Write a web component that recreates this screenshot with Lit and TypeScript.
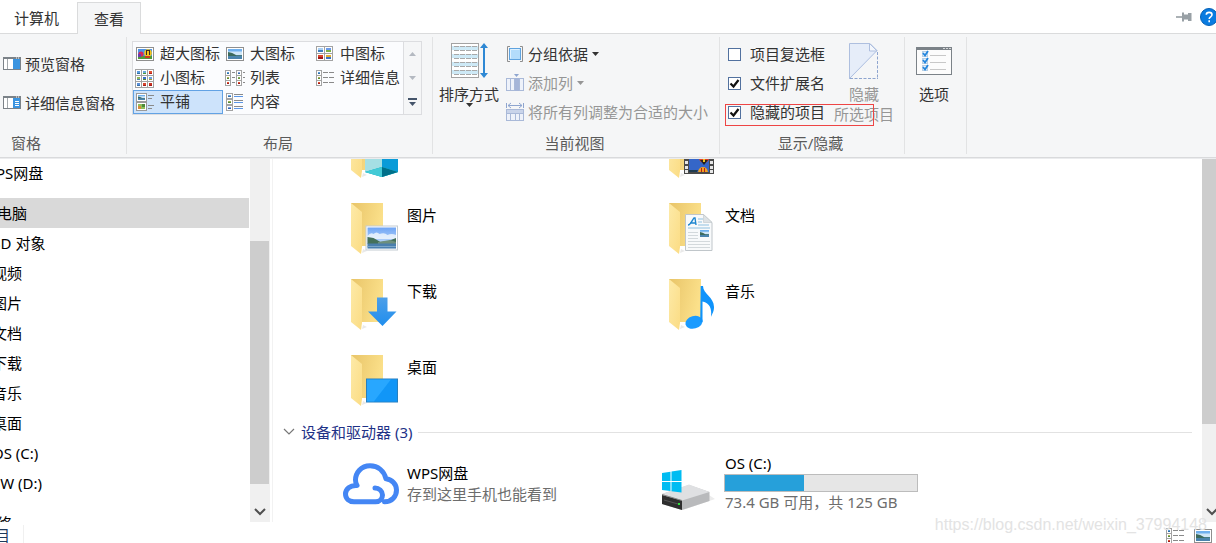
import { LitElement, html, svg, css, nothing } from "lit";
import { customElement, state } from "lit/decorators.js";

/* ---------- small ribbon glyphs ---------- */

const thumb = (x: number, y: number, w: number, h: number, c1: string, c2: string) => svg`
  <rect x=${x + 0.5} y=${y + 0.5} width=${w - 1} height=${h - 1} fill="#fff" stroke="#a3a3a3"/>
  <rect x=${x + 2} y=${y + 2} width=${w - 4} height=${(h - 4) / 2} fill=${c1}/>
  <rect x=${x + 2} y=${y + h / 2} width=${w - 4} height=${(h - 4) / 2} fill=${c2}/>`;

const line = (x: number, y: number, w: number, c = "#8a8a8a") =>
  svg`<rect x=${x} y=${y} width=${w} height="1" fill=${c}/>`;

const landscape = (x: number, y: number, w: number, h: number) => svg`
  <rect x=${x} y=${y} width=${w} height=${h} fill="#6fb0ee"/>
  <rect x=${x} y=${y + h * 0.25} width=${w} height=${h * 0.35} fill="#cfe6f8"/>
  <path d="M${x} ${y + h * 0.3}L${x + w * 0.3} ${y + h * 0.4}L${x + w * 0.6} ${y + h * 0.62}H${x + w}V${y + h * 0.75}H${x}Z" fill="#3c6a5c"/>
  <rect x=${x} y=${y + h * 0.72} width=${w} height=${h * 0.28} fill="#4a83ad"/>`;

const small = (body: unknown, w = 20, h = 20) =>
  html`<svg class="glyph" width=${w} height=${h} viewBox="0 0 ${w} ${h}" aria-hidden="true">${body}</svg>`;

const icons: Record<string, () => unknown> = {
  xl: () => small(svg`
    <rect x="1.5" y="3.5" width="17" height="13" fill="#fff" stroke="#8f8f8f"/>
    <rect x="3" y="5" width="14" height="10" fill="#4d93e6"/>
    <rect x="3" y="12" width="14" height="3" fill="#4f9a3b"/>
    <circle cx="6" cy="10" r="2.6" fill="#d5285a"/><rect x="3" y="10" width="3" height="3" fill="#6b3bb0"/>
    <circle cx="13" cy="9" r="3.8" fill="#f3c41c"/><rect x="11" y="7" width="1" height="4" fill="#3a2a20"/><rect x="14" y="7" width="1" height="4" fill="#3a2a20"/>
    <rect x="11" y="6" width="4" height="1" fill="#3a2a20"/><rect x="10" y="12" width="5" height="2" fill="#c93a22"/>`),
  lg: () => small(svg`<rect x="1.5" y="3.5" width="17" height="13" fill="#fff" stroke="#8f8f8f"/>${landscape(3, 5, 14, 10)}`),
  md: () => small(svg`${thumb(1, 2, 9, 8, "#a9d0f5", "#3f7fc0")}${thumb(9, 2, 9, 8, "#6c9bea", "#7ab04a")}
    ${thumb(1, 9, 9, 8, "#d8452c", "#a01818")}${thumb(9, 9, 9, 8, "#e0b030", "#3a72c8")}`),
  sm: () => small(svg`${[0, 1, 2].map((r) => [0, 1, 2].map((c) => svg`
    <rect x=${0.5 + c * 6} y=${1.5 + r * 6} width="6" height="6" fill="#fff" stroke="#a3a3a3"/>
    <rect x=${2 + c * 6} y=${3 + r * 6} width="3" height="2" fill=${[["#5a9be0", "#6aa8d8", "#e05030"], ["#8fb85a", "#3d6fc4", "#6a9fe0"], ["#5a8fd8", "#d8452c", "#c83020"]][r][c]}/>
    <rect x=${2 + c * 6} y=${5 + r * 6} width="3" height="1" fill=${[["#2f6f9f", "#4f9a3b", "#b01818"], ["#4f7fae", "#4f8a3b", "#9a9a3b"], ["#3a6fa8", "#a02020", "#a01818"]][r][c]}/>`))}`),
  list: () => small(svg`${[0, 1, 2].map((r) => svg`
    ${thumb(0, 2 + r * 5, 6, 6, ["#5a9be0", "#b0b050", "#e05030"][r], ["#2f6f9f", "#4f8a3b", "#a01818"][r])}${line(7, 4 + r * 5, 3)}
    ${thumb(11, 2 + r * 5, 6, 6, ["#8a9fe0", "#7fb85a", "#e05030"][r], ["#2f6f9f", "#6a8a3b", "#a01818"][r])}${line(18, 4 + r * 5, 2)}`)}`),
  details: () => small(svg`${[0, 1, 2].map((r) => svg`
    ${thumb(1, 2 + r * 5, 6, 6, ["#5a9be0", "#b0b050", "#e05030"][r], ["#2f6f9f", "#4f8a3b", "#a01818"][r])}
    ${line(8, 4 + r * 5, 5)}${line(14, 4 + r * 5, 5)}`)}`),
  tiles: () => small(svg`
    <rect x="1.5" y="1.5" width="10" height="8" fill="#fff" stroke="#9a9a9a"/>${landscape(3, 3, 7, 5)}
    <rect x="1.5" y="10.5" width="10" height="8" fill="#fff" stroke="#9a9a9a"/>
    <rect x="3" y="12" width="7" height="5" fill="#8fc05a"/><rect x="3" y="14" width="3" height="3" fill="#d88a3a"/><rect x="7" y="12" width="3" height="3" fill="#4f8a3b"/>
    ${line(13, 3, 6)}${line(13, 6, 4)}${line(13, 13, 6)}${line(13, 16, 4)}`),
  content: () => small(svg`${[0, 1, 2].map((r) => svg`
    ${thumb(1, 1 + r * 6, 7, 6, ["#6aa8e8", "#a0b050", "#7aa8e8"][r], ["#3a6fa8", "#4f8a3b", "#3a5fa8"][r])}
    ${line(9, 2 + r * 6, 9)}<rect x="9" y=${4 + r * 6} width="9" height="1" fill="#5b97e8"/>`)}`),
  preview: () => small(svg`
    <rect x="0.5" y="3.5" width="17" height="12" fill="#fff" stroke="#7b8288"/>
    <rect x="0" y="3" width="18" height="2" fill="#7b8288"/><path d="M13 4h1M15 4h1" stroke="#fff"/>
    <rect x="4" y="5" width="1" height="10" fill="#a4a9ad"/><rect x="10" y="5" width="7" height="10" fill="#3b94e0"/>`, 18),
  detailPane: () => small(svg`
    <rect x="0.5" y="3.5" width="17" height="12" fill="#fff" stroke="#7b8288"/>
    <rect x="0" y="3" width="18" height="2" fill="#7b8288"/><path d="M13 4h1M15 4h1" stroke="#fff"/>
    <rect x="4" y="5" width="1" height="10" fill="#a4a9ad"/><rect x="10" y="5" width="7" height="10" fill="#3b94e0"/>
    <path d="M12 8.500h4M12 10.500h4M12 12.500h4" stroke="#fff"/>`, 18),
  group: () => small(svg`
    <path d="M4 2.500H1.500v15H4M14 2.500h2.500v15H14" fill="none" stroke="#8f8f8f"/>
    <rect x="3.500" y="4.500" width="11" height="11" fill="#b3dcfb" stroke="#5fa3df"/><path d="M4.500 14.500v-9h9" fill="none" stroke="#dff1fe"/>`, 18),
  addCol: () => small(svg`
    <path d="M8 1h5l-2.500 3z" fill="#8ea5cf"/><rect x="0.500" y="5.500" width="17" height="12" fill="#eef2fa" stroke="#a9b9d8"/>
    <path d="M4.500 5v13M8.500 5v13M13.500 5v13" stroke="#a9b9d8"/><rect x="9" y="5" width="4" height="13" fill="#a5b5d8"/>`, 18),
  fitCols: () => small(svg`
    <path d="M0.500 1v5M17.500 1v5M2 3.500h14" stroke="#8ea5cf"/><path d="M5 1L2 3.500 5 6M13 1l3 2.500L13 6" fill="none" stroke="#8ea5cf"/>
    <rect x="0.500" y="7.500" width="17" height="11" fill="#eef2fa" stroke="#a9b9d8"/><rect x="1" y="8" width="16" height="3" fill="#c9d4ea"/>
    <path d="M0 11.500h18M4.500 12v7M9.500 12v7M13.500 12v7" stroke="#a9b9d8"/>`, 18),
};

const sortIcon = html`<svg class="glyph" width="37" height="37" viewBox="0 0 37 37" aria-hidden="true">
  <rect x="0.500" y="0.500" width="27" height="34" fill="#fff" stroke="#a3a3a3"/>
  ${[3, 11, 19, 27].map((y) => svg`<rect x="1" y=${y} width="26" height="4" fill="#cde9f6"/>`)}
  ${[3, 7, 11, 15, 19, 23, 27, 31].map((y) => svg`<path d="M3 ${y + 0.5}h5M9 ${y + 0.5}h5M15 ${y + 0.5}h5M21 ${y + 0.5}h5" stroke="#a8a8a8"/>`)}
  <path d="M33 0l4 5h-3v25h3l-4 5-4-5h3V5h-3z" fill="#2e88d4"/></svg>`;

const hideIcon = html`<svg class="glyph" width="30" height="37" viewBox="0 0 30 37" aria-hidden="true">
  <path d="M1 36V1h20l7 7z" fill="#e6edf9"/><path d="M0.500 36V0.500H21l7 7L0.500 35.500" fill="none" stroke="#aebfdf"/>
  <path d="M20.500 0.500v7.500H28z" fill="#f4f7fc" stroke="#aebfdf"/>
  <path d="M28.500 9v27M1 35.500h28" fill="none" stroke="#8ea5cf" stroke-dasharray="3 1.500"/></svg>`;

const optionsIcon = html`<svg class="glyph" width="36" height="28" viewBox="0 0 36 28" aria-hidden="true">
  <rect x="0.500" y="0.500" width="35" height="27" fill="#fcfcfc" stroke="#7b8288"/><rect width="36" height="3" fill="#7b8288"/>
  <path d="M27 1.500h2M30 1.500h2M33 1.500h2" stroke="#d5d8da"/>
  ${[4, 11, 18].map((y) => svg`<rect x="6.500" y=${y + 0.5} width="5" height="5" fill="#e7f1fb" stroke="#b5cfe6"/>
    <path d="M7 ${y + 2}l2 2.500 3-4.500" fill="none" stroke="#2486dd" stroke-width="1.800"/>
    <path d="M14 ${y + 4.5}h16" stroke="#c8c8c8"/>`)}</svg>`;

const caret = html`<svg class="caret" width="7" height="4" viewBox="0 0 7 4" aria-hidden="true"><path d="M0 0h7L3.500 4z" fill="currentColor"/></svg>`;

const chevron = (w: number, h: number, sw: number) => html`<svg class="glyph" width=${w} height=${h} viewBox="0 0 12 8" aria-hidden="true">
  <path d="M1 1l5 5 5-5" fill="none" stroke="currentColor" stroke-width=${sw}/></svg>`;

/* ---------- large tile art ---------- */

const overlays: Record<string, () => unknown> = {
  objects: () => svg`<path d="M15 16l17-6 16 6v30l-16 5-17-5z" fill="#35c3d6"/>
    <path d="M32 10l16 6v30l-16-5z" fill="#0a9bd8"/><path d="M15 16l17-6v31l-17 5z" fill="#a5dfe4"/>
    <path d="M15 46l17-5 16 5-16 5z" fill="#1fb5c6"/><path d="M32 41l16 5-16 5z" fill="#00708a"/><path d="M15 46l17-5v10z" fill="#43cad6"/>`,
  video: () => svg`<rect x="16" y="12" width="30" height="36" fill="#4a4a4a"/>
    <rect x="21" y="12" width="20" height="34" fill="#3566c8"/>
    ${[15, 20, 25, 30, 35, 40, 44].map((y) => svg`<rect x="17" y=${y} width="3" height="3" fill="#e8e8e8"/><rect x="42" y=${y} width="3" height="3" fill="#e8e8e8"/>`)}
    <ellipse cx="36" cy="32" rx="5" ry="5" fill="#e04428"/><path d="M32 34l4 5 4-5z" fill="#222"/><path d="M35 28h2v8h-2z" fill="#f3c41c"/>
    <path d="M30 46q1-5 5-5t5 5z" fill="#f0a020"/><path d="M33 42h1v4h-1zM36 42h1v4h-1z" fill="#b02020"/><path d="M21 44h9l-1 2h-8z" fill="#203c50"/>`,
  picture: () => svg`<rect x="16" y="24" width="31.500" height="24" fill="#fff" stroke="#c4ccd2"/>
    <rect x="17.500" y="25.500" width="28.500" height="21" fill="url(#sky)"/>
    <path d="M17.500 34q3-4 6-2 3-3 6 0 5-2 8 1 4-2 8.500 0v4h-28.500z" fill="#f4f9fd" opacity=".8"/>
    <path d="M17.500 35l6 1 7 4 8-1 7.500-3v6h-28.500z" fill="#44705a"/><path d="M28 40l12-2 6 2v2H28z" fill="#6d8f7c"/>
    <rect x="17.500" y="41.500" width="28.500" height="5" fill="#4a7fae"/><path d="M17.500 44.500h28.500" stroke="#7ba6c8"/>`,
  document: () => svg`<path d="M17.500 12.500h18l8.500 8V48.500h-26.500z" fill="#f8fafb" stroke="#c0c6ca"/><path d="M35.500 12.500v8H44z" fill="#dde2e5" stroke="#c0c6ca" stroke-width=".6"/>
    <path d="M20 23c3 0 4-5 6-7h1l1 7M22 21h6" fill="none" stroke="#1e86cf" stroke-width="1.400"/>
    <path d="M30 17h5M30 20h4M30 23h11M20 26h22" stroke="#8fc0e0"/>
    <path d="M20 30.500h10M20 33.500h10M20 36.500h10M20 39.500h22M20 42.500h22M20 45.500h22" stroke="#d3d9dc"/>${landscape(32, 28, 9, 7)}`,
  download: () => svg`<path d="M27 19.500h10.500v14h9L32.500 48 18 33.500h9z" fill="url(#blue)"/>`,
  music: () => svg`<ellipse cx="26" cy="44.300" rx="8.800" ry="6.200" transform="rotate(-15 26 44.300)" fill="#1a9bff"/>
    <path d="M32.700 8H35c0 8 11 11 11 21 0 5-2 7-3 10 1-8-1-14-8.500-15.500V44h-2.300z" fill="#0f93fb"/>`,
  desktop: () => svg`<rect x="16.500" y="25" width="31" height="23" fill="#0c9cff" stroke="#287fbd"/><path d="M17 25.500h24L24 47.500h-7z" fill="#35adff" opacity=".7"/><path d="M41 25.500h6v22H24z" fill="#1592f2" opacity=".6"/>`,
};

const folder = (kind: string) => html`<svg class="art" width="64" height="56" viewBox="-7 0 64 56" aria-hidden="true">
  <defs>
    <linearGradient id="back" x1="0" x2="1" y2="0.300"><stop offset="0" stop-color="#e8c468"/><stop offset="1" stop-color="#fbe08a"/></linearGradient>
    <linearGradient id="flap" x1="0" x2="1" y2="1"><stop offset="0" stop-color="#fdeaa8"/><stop offset="1" stop-color="#fbdc84"/></linearGradient>
    <linearGradient id="sky" x2="0" y2="1"><stop offset="0" stop-color="#6fa5f5"/><stop offset="1" stop-color="#d5e8fa"/></linearGradient>
    <linearGradient id="blue" x2="0" y2="1"><stop offset="0" stop-color="#4d9fe8"/><stop offset="1" stop-color="#1f8eee"/></linearGradient>
  </defs>
  <path d="M12 51l5-2-4-2z" fill="#e9e9e9"/>
  <path d="M1 1h32v43H1z" fill="url(#back)"/><path d="M1 1l11 9v35l-1 7L1 44z" fill="url(#flap)"/>
  ${overlays[kind]()}</svg>`;

const cloud = html`<svg class="art" width="64" height="42" viewBox="0 0 64 42" aria-hidden="true">
  <path d="M41.500 38.700c7.500 0 12-5.500 12-11.700 0-6-4.500-10.500-10.500-11.200C41 8 35 2.700 27 2.700 18 2.700 12.500 10 12.500 17c0 2 .3 3.800 1.500 5.500C7 22 2.500 26 2.500 31c0 4.500 3.500 7.700 8.500 7.700h21.500c4.500 0 7-3.200 7-6.700 0-4-3.500-7-7.500-7"
    fill="none" stroke="#4486f4" stroke-width="5" stroke-linecap="round" stroke-linejoin="round"/></svg>`;

const drive = html`<svg class="art" width="64" height="46" viewBox="0 0 64 46" aria-hidden="true">
  <path d="M22 45l32-11-6-4z" fill="#ececec"/>
  <path d="M1 29l27-9 20.500 7v9L21 45 1 39z" fill="#b9babc"/><path d="M1 29l27-9.500L48.500 27 21 35.500z" fill="#dfe0e2"/>
  <path d="M1 30l20 5.500V45L1 39z" fill="#2e2e2e"/><path d="M1 29.500l20 6" stroke="#8a8a8a"/><path d="M3 35l14 4" stroke="#555"/><rect x="17" y="38" width="2" height="2" fill="#2fe03c"/>
  <path d="M1 8l8.500-1.200V16H1zM10.500 6.600L20.500 5v11h-10zM1 17h8.500v9L1 25zM10.500 17h10v10.500l-10-1.300z" fill="#00bcf2"/></svg>`;

@customElement("app-root")
export class AppRoot extends LitElement {
  @state() private view = "平铺";

  private views = [
    ["xl", "超大图标"], ["lg", "大图标"], ["md", "中图标"],
    ["sm", "小图标"], ["list", "列表"], ["details", "详细信息"],
    ["tiles", "平铺"], ["content", "内容"],
  ];

  private tree = [
    { name: "WPS网盘" },
    { name: "此电脑", gap: true, selected: true },
    ...["3D 对象", "视频", "图片", "文档", "下载", "音乐", "桌面", "OS (C:)", "SW (D:)"].map((name) => ({ name, child: true })),
    { name: "网络", gap: true },
  ] as { name: string; gap?: boolean; selected?: boolean; child?: boolean }[];

  private folders = [["picture", "图片"], ["document", "文档"], ["download", "下载"], ["music", "音乐"], ["desktop", "桌面"]];

  static styles = css`
    :host {
      display: flex; flex-direction: column; height: 100vh; overflow: hidden; position: relative;
      background: #fff; color: #000;
      font: 15px/20px "Noto Sans", "Noto Sans CJK SC", sans-serif;
    }
    * { box-sizing: border-box; }
    button { font: inherit; color: inherit; background: none; border: 0; padding: 0; margin: 0; text-align: left; white-space: nowrap; }
    svg { display: block; flex: none; }

    .tabs { display: flex; align-items: flex-end; height: 34px; flex: none; border-bottom: 1px solid #dadbdc; color: #333; }
    .tab { height: 31px; padding: 0 13px; border: 1px solid transparent; border-bottom: 0; }
    .tab.active { height: 32px; padding: 0 16px; margin-bottom: -1px; background: #f5f6f7; border-color: #dadbdc; }
    .tab.first { width: 77px; }
    .tools { display: flex; align-items: center; gap: 8px; margin-left: auto; height: 100%; margin-right: -2px; }

    .ribbon { display: flex; flex: none; height: 124px; padding-top: 3px; background: #f5f6f7; border-bottom: 1px solid #d9dadc; box-shadow: 0 1px #ebecee; position: relative; z-index: 1; color: #333; }
    .group { display: flex; flex-direction: column; border-right: 1px solid #e2e3e4; margin-bottom: 3px; flex: none; }
    .group h2 { margin: auto 0 0; padding-bottom: 1px; padding-right: 3px; font: inherit; text-align: center; color: #5a5a5a; }
    .panes { width: 127px; padding-left: 3px; }
    .panes h2 { text-align: left; padding-left: 8px; }
    .pane-list { display: grid; gap: 19px; padding-top: 17px; }
    .row { display: flex; align-items: center; gap: 4px; height: 20px; }
    .layout { width: 306px; padding: 4px 5px 0; }
    .gallery { display: flex; }
    .cells { display: grid; grid-template-columns: repeat(3, 90px); border: 1px solid #dcdde0; background: #fbfcfe; }
    .cell { display: flex; align-items: center; gap: 5px; height: 24px; padding: 0 1px; border: 1px solid transparent; }
    .cell span { padding-bottom: 2px; }
    .cell.on { background: #cde3fb; border-color: #62a2e4; }
    .spin { display: grid; grid-template-rows: 24px 24px 24px; width: 18px; border: 1px solid #dcdde0; border-left: 0; color: #b4b9c1; }
    .spin button { display: grid; place-items: center; }
    .spin .more { color: #44546a; }
    .current { width: 287px; }
    .pair { display: flex; }
    .big { display: flex; flex-direction: column; align-items: center; }
    .sort { width: 73px; padding: 6px 1px 0 0; }
    .sort .glyph { margin-bottom: 5px; }
    .sort span { line-height: 18px; }
    .rows { display: grid; gap: 9px; padding-top: 7px; align-content: start; }
    .off { color: #969696; }
    .show { width: 185px; }
    .checks { position: relative; display: grid; gap: 9px; padding: 7px 0 0 8px; width: 114px; align-content: start; }
    .check { display: flex; align-items: center; gap: 9px; white-space: nowrap; }
    input { appearance: none; width: 13px; height: 13px; margin: 0; border: 1px solid #52719f; background: #fff; }
    input:checked { background: #fff url("data:image/svg+xml,%3Csvg xmlns='http://www.w3.org/2000/svg' viewBox='0 0 11 11'%3E%3Cpath d='M1.500 5.500l3 3L9.500 2' fill='none' stroke='%23111' stroke-width='2.200'/%3E%3C/svg%3E"); }
    .mark { position: absolute; left: 5px; top: 67px; width: 149px; height: 22px; border: 1px solid #ee4545; pointer-events: none; }
    .hide { width: 60px; padding-top: 6px; white-space: normal; text-align: center; }
    .hide .glyph { margin-bottom: 4px; }
    .options { width: 62px; }
    .options .big { padding-top: 10px; padding-right: 3px; }
    .options .glyph { margin-bottom: 9px; }

    .body { display: flex; flex: 1; min-height: 0; overflow: hidden; }
    nav { width: 249px; overflow: hidden; flex: none; }
    nav ul { list-style: none; margin: 0; padding: 0; }
    nav a { display: block; height: 30px; line-height: 30px; text-indent: -18px; color: inherit; text-decoration: none; white-space: nowrap; }
    nav .child a { text-indent: -8px; }
    nav .gap { margin-top: 10px; }
    nav .selected { background: #d9d9d9; }
    .scroll { display: flex; flex-direction: column; flex: none; background: #f0f0f0; width: 20px; margin-left: 1px; color: #505050; overflow: hidden; }
    .scroll i { background: #cdcdcd; margin-right: 1px; }
    .scroll button { display: grid; place-items: center; height: 20px; margin-top: auto; flex: none; }
    .left i { flex: 0 0 243px; margin-top: 83px; }
    .right { width: 14px; margin-left: 0; }
    .right i { flex: 0 0 266px; margin-right: 0; }
    .right button { width: 19px; }
    main { flex: 1; min-width: 0; margin-left: 2px; border-left: 1px solid #f2f2f2; overflow: hidden; }
    .tiles { display: grid; grid-template-columns: repeat(2, 318px); padding-left: 70px; }
    .tile { display: flex; height: 76px; padding-top: 12px; }
    .tile.cut { height: 32px; padding: 0; align-items: flex-end; overflow: hidden; }
    .tile.cut .art { margin-bottom: 8px; }
    .tile .name { padding-top: 3px; }
    .section { display: flex; align-items: center; gap: 6px; margin: 4px 10px 0; color: #1e3287; height: 20px; }
    .section h3 { margin: 0; font: inherit; }
    .section hr { flex: 1; border: 0; border-top: 1px solid #e2e2e2; margin: 0; }
    .section button { color: #777; }
    .dev { display: flex; align-items: flex-start; padding-top: 21px; }
    .dev p { margin: 0; line-height: 21px; white-space: nowrap; }
    .dev .sub { color: #6d6d6d; }
    .disk { padding-top: 11px; }
    .disk .art { margin-top: 12px; }
    .meter { width: 194px; height: 18px; border: 1px solid #bcbcbc; background: #e6e6e6; margin-left: -1px; }
    .fill { height: 100%; background: #26a0da; }

    footer { display: flex; flex: none; height: 21px; padding: 3px 3px 0 0; overflow: hidden; color: #1e395b; }
    .count { width: 24px; border-right: 1px solid #f0f0f0; direction: rtl; padding-right: 13px; white-space: nowrap; overflow: hidden; }
    .modes { display: flex; gap: 8px; margin-left: auto; padding-top: 1px; }
    .water { position: absolute; right: 9px; bottom: 8px; font: 16px/20px "Liberation Sans", sans-serif; color: #e3e3e3; pointer-events: none; z-index: 2; }
  `;

  private check(id: string, label: string, on: boolean) {
    return html`<label class="check" for=${id}><input type="checkbox" id=${id} ?checked=${on} />${label}</label>`;
  }

  render() {
    return html`
      <div class="tabs" role="tablist">
        <button class="tab first" role="tab">计算机</button>
        <button class="tab active" role="tab" aria-selected="true">查看</button>
        <div class="tools">
          <button aria-label="固定功能区"><svg width="16" height="10" viewBox="0 0 16 10"><path d="M0 5h6" stroke="#8f979d" stroke-width="1.500"/><path d="M6 0.500h2v2h4V1h3.500v8H12V7.500H8v2H6z" fill="#98a0a5"/></svg></button>
          <button aria-label="帮助"><svg width="18" height="18" viewBox="0 0 18 18"><circle cx="9" cy="9" r="8.500" fill="#0a7be0" stroke="#0560b5"/><path d="M6.300 6.800C6.300 3.500 12 3.500 12 6.800c0 2-2.800 2.100-2.800 4.200M9.200 12.300v1.900" fill="none" stroke="#fff" stroke-width="1.600"/></svg></button>
        </div>
      </div>

      <div class="ribbon">
        <section class="group panes">
          <div class="pane-list">
            <button class="row">${icons.preview()}预览窗格</button>
            <button class="row">${icons.detailPane()}详细信息窗格</button>
          </div>
          <h2>窗格</h2>
        </section>
        <section class="group layout">
          <div class="gallery">
            <div class="cells">
              ${this.views.map(([icon, name]) => html`
                <button class="cell ${this.view === name ? "on" : ""}" @click=${() => (this.view = name)}>${icons[icon]()}<span>${name}</span></button>`)}
            </div>
            <div class="spin">
              <button aria-label="向上"><svg width="7" height="4" viewBox="0 0 7 4"><path d="M0 4h7L3.500 0z" fill="currentColor"/></svg></button>
              <button aria-label="向下">${caret}</button>
              <button class="more" aria-label="更多"><svg width="9" height="8" viewBox="0 0 9 8"><path d="M0 0h9v2H0zM1 4h7L4.500 8z" fill="currentColor"/></svg></button>
            </div>
          </div>
          <h2>布局</h2>
        </section>
        <section class="group current">
          <div class="pair">
            <button class="big sort">${sortIcon}<span>排序方式</span>${caret}</button>
            <div class="rows">
              <button class="row">${icons.group()}<span>分组依据</span>${caret}</button>
              <button class="row off">${icons.addCol()}<span>添加列</span>${caret}</button>
              <button class="row off">${icons.fitCols()}<span>将所有列调整为合适的大小</span></button>
            </div>
          </div>
          <h2>当前视图</h2>
        </section>
        <section class="group show">
          <div class="pair">
            <div class="checks">
              ${this.check("boxes", "项目复选框", false)}
              ${this.check("ext", "文件扩展名", true)}
              ${this.check("hidden", "隐藏的项目", true)}
              <div class="mark"></div>
            </div>
            <button class="big hide off">${hideIcon}<span>隐藏<br />所选项目</span></button>
          </div>
          <h2>显示/隐藏</h2>
        </section>
        <section class="group options">
          <button class="big">${optionsIcon}<span>选项</span></button>
        </section>
      </div>

      <div class="body">
        <nav>
          <ul>
            ${this.tree.map((n) => html`<li class="${n.gap ? "gap" : ""} ${n.child ? "child" : ""} ${n.selected ? "selected" : ""}">
              <a href="#" aria-current=${n.selected ? "page" : nothing}>${n.name}</a></li>`)}
          </ul>
        </nav>
        <div class="scroll left"><i></i><button aria-label="向下滚动">${chevron(12, 8, 2)}</button></div>
        <main>
          <div class="tiles">
            <div class="tile cut">${folder("objects")}</div>
            <div class="tile cut">${folder("video")}</div>
            ${this.folders.map(([kind, name]) => html`<div class="tile">${folder(kind)}<span class="name">${name}</span></div>`)}
          </div>
          <div class="section"><button aria-label="折叠">${chevron(12, 8, 1.2)}</button><h3>设备和驱动器 (3)</h3><hr /></div>
          <div class="tiles">
            <div class="dev">${cloud}<div class="text"><p>WPS网盘</p><p class="sub">存到这里手机也能看到</p></div></div>
            <div class="dev disk">${drive}<div class="text">
              <p>OS (C:)</p>
              <div class="meter" role="meter" aria-label="OS (C:)" aria-valuenow="41"><div class="fill" style="width:41%"></div></div>
              <p class="sub">73.4 GB 可用，共 125 GB</p></div></div>
          </div>
        </main>
        <div class="scroll right"><i></i><button aria-label="向下滚动">${chevron(12, 8, 2)}</button></div>
      </div>

      <footer>
        <span class="count">目</span>
        <div class="modes"><button aria-label="详细信息">${icons.details()}</button><button aria-label="大图标">${icons.lg()}</button></div>
      </footer>
      <div class="water">https://blog.csdn.net/weixin_37994148</div>
    `;
  }
}
